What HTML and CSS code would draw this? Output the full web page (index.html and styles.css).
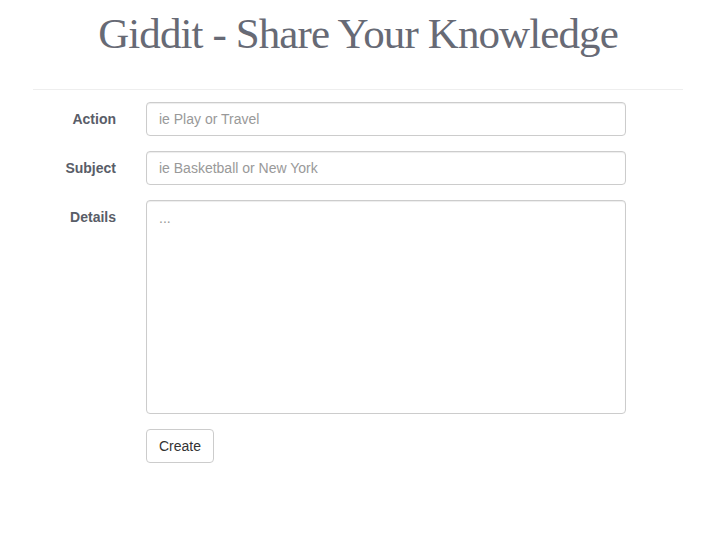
FILE: index.html
```html
<!DOCTYPE html>
<html>
<head>
<meta charset="utf-8">
<link rel="stylesheet" href="styles.css">
</head>
<body>
<div class="page">
  <h1 class="title">Giddit - Share Your Knowledge</h1>
  <hr class="rule">
  <form class="form">
    <div class="row">
      <label class="label" for="action">Action</label>
      <input class="field" id="action" type="text" placeholder="ie Play or Travel">
    </div>
    <div class="row">
      <label class="label" for="subject">Subject</label>
      <input class="field" id="subject" type="text" placeholder="ie Basketball or New York">
    </div>
    <div class="row">
      <label class="label" for="details">Details</label>
      <textarea class="field area" id="details" placeholder="..." spellcheck="false"></textarea>
    </div>
    <div class="row">
      <div class="label"></div>
      <button class="btn" type="button">Create</button>
    </div>
  </form>
</div>
</body>
</html>
```
FILE: styles.css
```css
html, body {
  margin: 0;
  padding: 0;
  background: #fff;
}
body {
  font-family: "Liberation Sans", Arial, sans-serif;
  font-size: 14px;
  color: #333;
}
.page {
  width: 650px;
  margin-left: 33px;
}
.title {
  margin: 0;
  padding-top: 9px;
  height: 78px;
  box-sizing: border-box;
  text-align: center;
  font-family: "Liberation Serif", "Times New Roman", serif;
  font-weight: normal;
  font-size: 43px;
  letter-spacing: -0.9px;
  line-height: 50px;
  color: #676a75;
}
.rule {
  margin: 11px 0 12px;
  border: 0;
  border-top: 1px solid #eee;
  height: 0;
}
.form {
  display: flex;
  flex-direction: column;
  gap: 15px;
}
.row {
  display: flex;
  align-items: flex-start;
}
.label {
  width: 113px;
  flex: none;
  box-sizing: border-box;
  padding-right: 30px;
  padding-top: 9px;
  text-align: right;
  font-weight: bold;
  font-size: 14px;
  line-height: 16px;
  color: #595d68;
}
.field {
  width: 480px;
  height: 34px;
  box-sizing: border-box;
  padding: 6px 12px;
  border: 1px solid #ccc;
  border-radius: 4px;
  font-family: "Liberation Sans", Arial, sans-serif;
  font-size: 14px;
  line-height: 20px;
  color: #555;
  box-shadow: inset 0 1px 1px rgba(0,0,0,0.075);
  outline: none;
  margin: 0;
}
.field::placeholder {
  color: #999;
}
.area {
  height: 214px;
  resize: none;
  padding-top: 7px;
}
.btn {
  height: 34px;
  width: 68px;
  padding: 6px 12px;
  border: 1px solid #ccc;
  border-radius: 4px;
  background: #fff;
  font-family: "Liberation Sans", Arial, sans-serif;
  font-size: 14px;
  line-height: 20px;
  color: #333;
  margin: 0;
}
```
